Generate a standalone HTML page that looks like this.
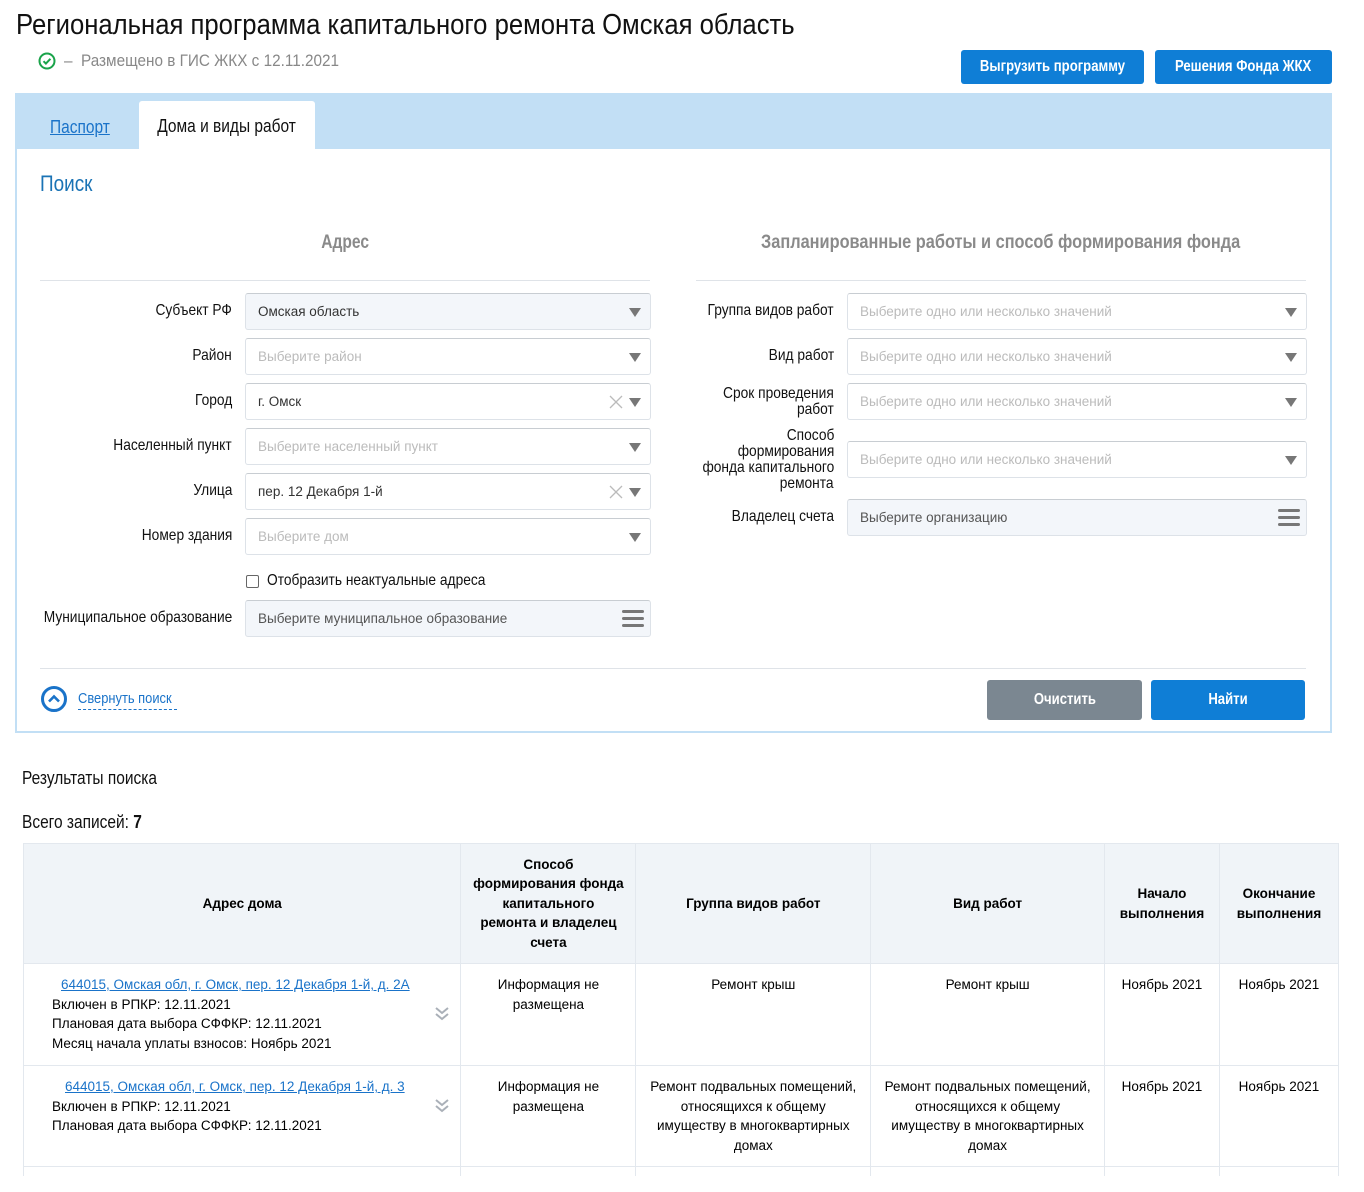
<!DOCTYPE html>
<html><head><meta charset="utf-8"><style>
*{box-sizing:border-box;margin:0;padding:0}
html,body{width:1364px;height:1192px;overflow:hidden}
body{background:#fff;position:relative;font-family:"Liberation Sans",sans-serif;color:#000}
.a{position:absolute}
.n{display:inline-block;white-space:nowrap;transform:scaleX(.86);transform-origin:left center}
.nr{display:inline-block;white-space:nowrap;transform:scaleX(.86);transform-origin:right center}
.nc{display:inline-block;white-space:nowrap;transform:scaleX(.86);transform-origin:center center}
.btn{position:absolute;color:#fff;border-radius:3px;font-size:16px;display:flex;align-items:center;justify-content:center;font-weight:bold}
.btn span{display:inline-block;white-space:nowrap;transform:scaleX(.82)}
.lbl{position:absolute;text-align:right;font-size:16px;line-height:16px;color:#111}
.inp{position:absolute;height:37px;border:1px solid #dde2e8;border-top-color:#c8cdd2;border-radius:3px;background:#fff;font-size:13.5px;color:#bbb;padding-left:12px;line-height:35px}
.inp.v{color:#333}
.inp.g{background:#f3f6fa}
.arr{position:absolute;right:9px;top:14px;width:0;height:0;border-left:6px solid transparent;border-right:6px solid transparent;border-top:9px solid #777}
.x{position:absolute;right:26px;top:10px;width:16px;height:16px}
.ham{position:absolute;right:6px;top:9px;width:22px;height:18px}
.ham i{display:block;height:3px;background:#777;border-radius:2px;margin-bottom:4px}
.hr{position:absolute;height:1px;background:#dfe3e8}
table{position:absolute;left:23px;top:843px;width:1316px;border-collapse:collapse;font-size:13.5px}
td,th{border:1px solid #e3e8ee;vertical-align:top;text-align:center;line-height:19.5px}
th{background:#f0f4f8;vertical-align:middle;font-weight:bold;font-size:13.5px;height:120px;padding:0 8px}
td{padding:11px 6px 8px}
td.l{text-align:left;padding-left:28px;position:relative}
td a{color:#1a73c9;text-decoration:underline}
.chev{position:absolute;right:10px;top:42px}
</style></head><body>

<div class="a" style="left:16px;top:9px;font-size:29px;color:#111"><span class="n" style="transform:scaleX(.885)">Региональная программа капитального ремонта Омская область</span></div>
<svg class="a" style="left:38px;top:52px" width="18" height="18" viewBox="0 0 18 18"><circle cx="9" cy="9" r="7.5" fill="none" stroke="#1aa34a" stroke-width="2"/><path d="M5.5 9.2l2.4 2.4 4.5-4.8" fill="none" stroke="#1aa34a" stroke-width="2"/></svg>
<div class="a" style="left:64px;top:51px;font-size:17px;color:#888"><span class="n" style="transform:scaleX(.9)">–&nbsp; Размещено в ГИС ЖКХ с 12.11.2021</span></div>

<div class="btn" style="left:961px;top:50px;width:183px;height:34px;background:#0f7ed6"><span>Выгрузить программу</span></div>
<div class="btn" style="left:1155px;top:50px;width:177px;height:34px;background:#0f7ed6"><span>Решения Фонда ЖКХ</span></div>

<div class="a" style="left:15px;top:93px;width:1317px;height:640px;border:2px solid #c2dff5;border-top:none"></div>
<div class="a" style="left:15px;top:93px;width:1317px;height:56px;background:#c2dff5"></div>
<div class="a" style="left:50px;top:117px;font-size:18px;color:#1a73c9"><span class="n" style="text-decoration:underline">Паспорт</span></div>
<div class="a" style="left:139px;top:101px;width:176px;height:48px;background:#fff;border-radius:3px 3px 0 0;font-size:18px;text-align:center;line-height:50px;color:#111"><span class="nc">Дома и виды работ</span></div>

<div class="a" style="left:40px;top:171px;font-size:22px;color:#1a73b5"><span class="n">Поиск</span></div>
<div class="a" style="left:40px;top:232px;width:610px;text-align:center;font-size:19px;color:#8a8a8a;font-weight:bold"><span class="nc" style="transform:scaleX(.82)">Адрес</span></div>
<div class="a" style="left:696px;top:232px;width:610px;text-align:center;font-size:19px;color:#8a8a8a;font-weight:bold"><span class="nc" style="transform:scaleX(.86)">Запланированные работы и способ формирования фонда</span></div>
<div class="hr" style="left:40px;top:280px;width:610px"></div>
<div class="hr" style="left:696px;top:280px;width:610px"></div>

<div class="lbl" style="left:0;top:303px;width:232px"><span class="nr">Субъект РФ</span></div>
<div class="inp v g" style="left:245px;top:293px;width:406px">Омская область<span class="arr"></span></div>
<div class="lbl" style="left:0;top:348px;width:232px"><span class="nr">Район</span></div>
<div class="inp" style="left:245px;top:338px;width:406px">Выберите район<span class="arr"></span></div>
<div class="lbl" style="left:0;top:393px;width:232px"><span class="nr">Город</span></div>
<div class="inp v" style="left:245px;top:383px;width:406px">г. Омск<svg class="x" viewBox="0 0 16 16"><path d="M2 2l12 12M14 2L2 14" stroke="#bbb" stroke-width="1.3"/></svg><span class="arr"></span></div>
<div class="lbl" style="left:0;top:438px;width:232px"><span class="nr">Населенный пункт</span></div>
<div class="inp" style="left:245px;top:428px;width:406px">Выберите населенный пункт<span class="arr"></span></div>
<div class="lbl" style="left:0;top:483px;width:232px"><span class="nr">Улица</span></div>
<div class="inp v" style="left:245px;top:473px;width:406px">пер. 12 Декабря 1-й<svg class="x" viewBox="0 0 16 16"><path d="M2 2l12 12M14 2L2 14" stroke="#bbb" stroke-width="1.3"/></svg><span class="arr"></span></div>
<div class="lbl" style="left:0;top:528px;width:232px"><span class="nr">Номер здания</span></div>
<div class="inp" style="left:245px;top:518px;width:406px">Выберите дом<span class="arr"></span></div>
<div class="a" style="left:246px;top:575px;width:13px;height:13px;border:1px solid #666;border-radius:2px"></div>
<div class="lbl" style="left:267px;top:573px;text-align:left"><span class="n">Отобразить неактуальные адреса</span></div>
<div class="lbl" style="left:0;top:610px;width:232px"><span class="nr">Муниципальное образование</span></div>
<div class="inp v g" style="left:245px;top:600px;width:406px;color:#555">Выберите муниципальное образование<span class="ham"><i></i><i></i><i></i></span></div>

<div class="lbl" style="left:650px;top:303px;width:184px"><span class="nr">Группа видов работ</span></div>
<div class="inp" style="left:847px;top:293px;width:460px">Выберите одно или несколько значений<span class="arr"></span></div>
<div class="lbl" style="left:650px;top:348px;width:184px"><span class="nr">Вид работ</span></div>
<div class="inp" style="left:847px;top:338px;width:460px">Выберите одно или несколько значений<span class="arr"></span></div>
<div class="lbl" style="left:650px;top:386px;width:184px"><span class="nr">Срок проведения</span><br><span class="nr">работ</span></div>
<div class="lbl" style="left:650px;top:428px;width:184px"><span class="nr">Способ</span><br><span class="nr">формирования</span><br><span class="nr">фонда капитального</span><br><span class="nr">ремонта</span></div>
<div class="inp" style="left:847px;top:383px;width:460px">Выберите одно или несколько значений<span class="arr"></span></div>
<div class="inp" style="left:847px;top:441px;width:460px">Выберите одно или несколько значений<span class="arr"></span></div>
<div class="lbl" style="left:650px;top:509px;width:184px"><span class="nr">Владелец счета</span></div>
<div class="inp v g" style="left:847px;top:499px;width:460px;color:#555">Выберите организацию<span class="ham"><i></i><i></i><i></i></span></div>

<div class="hr" style="left:40px;top:668px;width:1266px"></div>
<svg class="a" style="left:40px;top:685px" width="28" height="28" viewBox="0 0 28 28"><circle cx="14" cy="14" r="11.5" fill="none" stroke="#1a73c9" stroke-width="3"/><path d="M9 16.5l5-5 5 5" fill="none" stroke="#1a73c9" stroke-width="2.6"/></svg>
<div class="a" style="left:78px;top:690px;width:99px;height:20px;border-bottom:1px dashed #1a73c9;font-size:15px;color:#1a73c9"><span class="n">Свернуть поиск</span></div>
<div class="btn" style="left:987px;top:680px;width:155px;height:40px;background:#7b8791"><span>Очистить</span></div>
<div class="btn" style="left:1151px;top:680px;width:154px;height:40px;background:#0f7ed6"><span>Найти</span></div>

<div class="a" style="left:22px;top:768px;font-size:18px;color:#111"><span class="n">Результаты поиска</span></div>
<div class="a" style="left:22px;top:812px;font-size:18px;color:#111"><span class="n">Всего записей: <b>7</b></span></div>

<table>
<colgroup><col style="width:438px"><col style="width:175px"><col style="width:235px"><col style="width:234px"><col style="width:115px"><col style="width:119px"></colgroup>
<tr><th>Адрес дома</th><th>Способ<br>формирования фонда<br>капитального<br>ремонта и владелец<br>счета</th><th>Группа видов работ</th><th>Вид работ</th><th>Начало<br>выполнения</th><th>Окончание<br>выполнения</th></tr>
<tr style="height:102px"><td class="l"><a style="margin-left:9px">644015, Омская обл, г. Омск, пер. 12 Декабря 1-й, д. 2А</a><br>Включен в РПКР: 12.11.2021<br>Плановая дата выбора СФФКР: 12.11.2021<br>Месяц начала уплаты взносов: Ноябрь 2021<svg class="chev" width="16" height="16" viewBox="0 0 16 16"><path d="M2 2l6 5 6-5M2 8l6 5 6-5" fill="none" stroke="#aab0b8" stroke-width="2"/></svg></td><td>Информация не<br>размещена</td><td>Ремонт крыш</td><td>Ремонт крыш</td><td>Ноябрь 2021</td><td>Ноябрь 2021</td></tr>
<tr style="height:101px"><td class="l"><a style="margin-left:13px">644015, Омская обл, г. Омск, пер. 12 Декабря 1-й, д. 3</a><br>Включен в РПКР: 12.11.2021<br>Плановая дата выбора СФФКР: 12.11.2021<svg class="chev" style="top:32px" width="16" height="16" viewBox="0 0 16 16"><path d="M2 2l6 5 6-5M2 8l6 5 6-5" fill="none" stroke="#aab0b8" stroke-width="2"/></svg></td><td>Информация не<br>размещена</td><td>Ремонт подвальных помещений,<br>относящихся к общему<br>имуществу в многоквартирных<br>домах</td><td>Ремонт подвальных помещений,<br>относящихся к общему<br>имуществу в многоквартирных<br>домах</td><td>Ноябрь 2021</td><td>Ноябрь 2021</td></tr>
<tr style="height:30px"><td></td><td></td><td></td><td></td><td></td><td></td></tr>
</table>
<div class="a" style="left:0;top:1176px;width:1364px;height:40px;background:#fff"></div>
</body></html>
